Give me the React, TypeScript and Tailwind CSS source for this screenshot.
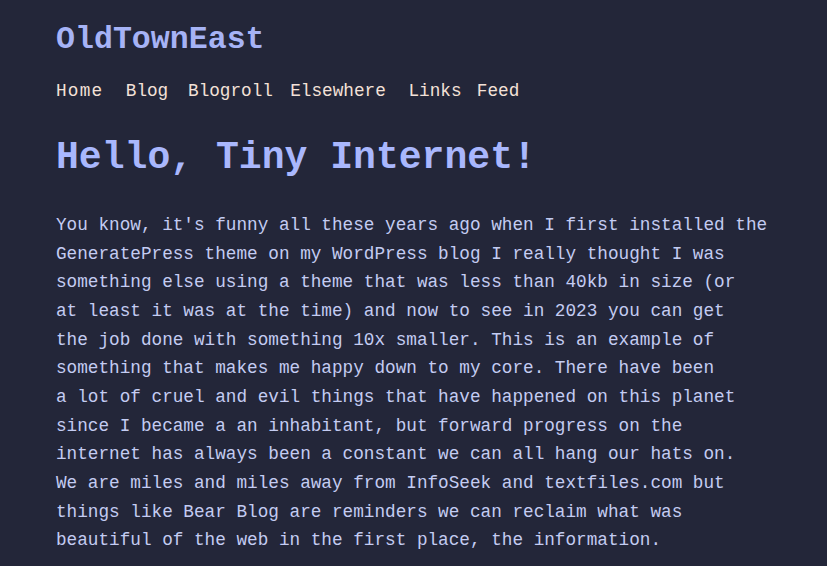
import React from "react";

const lines = [
  "You know, it's funny all these years ago when I first installed the",
  "GeneratePress theme on my WordPress blog I really thought I was",
  "something else using a theme that was less than 40kb in size (or",
  "at least it was at the time) and now to see in 2023 you can get",
  "the job done with something 10x smaller. This is an example of",
  "something that makes me happy down to my core. There have been",
  "a lot of cruel and evil things that have happened on this planet",
  "since I became a an inhabitant, but forward progress on the",
  "internet has always been a constant we can all hang our hats on.",
  "We are miles and miles away from InfoSeek and textfiles.com but",
  "things like Bear Blog are reminders we can reclaim what was",
  "beautiful of the web in the first place, the information.",
];

export default function App() {
  return (
    <div
      className="min-h-[566px] w-full bg-[#232639] pl-[56px] pt-[20px]"
      style={{ fontFamily: '"Liberation Mono", "DejaVu Sans Mono", monospace' }}
    >
      <div className="text-[31.6px] leading-[40px] font-bold text-[#a6b3f6]">OldTownEast</div>
      <nav className="mt-[17px] flex text-[17.7px] leading-[28px] text-[#f3e1d8]">
        <a className="mr-[22.5px] tracking-[1.2px]">Home</a>
        <a className="mr-[19.8px]">Blog</a>
        <a className="mr-[17.3px]">Blogroll</a>
        <a className="mr-[22.7px]">Elsewhere</a>
        <a className="mr-[15.3px]">Links</a>
        <a>Feed</a>
      </nav>
      <h1 className="mt-[29px] text-[38.1px] leading-[48px] font-bold text-[#a9b7fd]">
        Hello, Tiny Internet!
      </h1>
      <p className="mt-[29px] whitespace-nowrap text-[17.7px] leading-[28.65px] text-[#c4ccf2]">
        {lines.map((l, i) => (
          <React.Fragment key={i}>
            {l}
            {i < lines.length - 1 && <br />}
          </React.Fragment>
        ))}
      </p>
    </div>
  );
}
